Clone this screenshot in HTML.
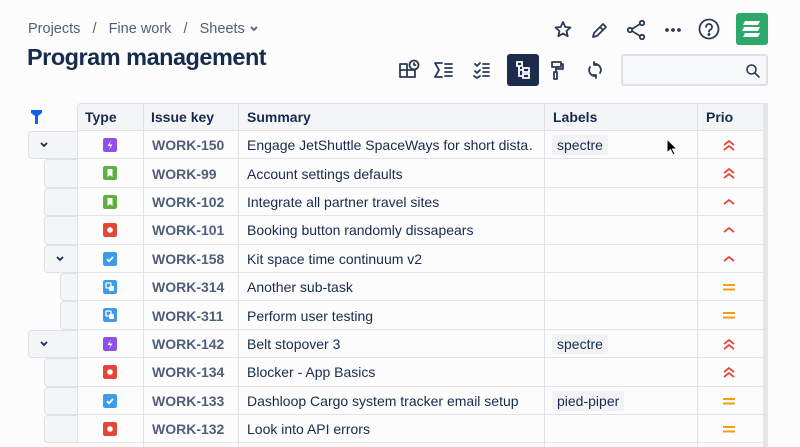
<!DOCTYPE html>
<html><head><meta charset="utf-8">
<style>
*{box-sizing:border-box;margin:0;padding:0}
html,body{width:800px;height:447px;overflow:hidden}
body{background:#fcfcfd;font-family:"Liberation Sans",sans-serif;position:relative;color:#172b4d}
.a{position:absolute}
.bc{left:28px;top:21px;font-size:14.5px;color:#505f79;white-space:nowrap}
.title{left:27px;top:44px;font-size:23.5px;font-weight:bold;color:#172b4d;letter-spacing:-0.5px}
.hdr{top:103px;height:28px;background:#f4f5f7;border-top:1px solid #dfe1e6;border-bottom:1px solid #dfe1e6;font-weight:bold;font-size:14px}
.row{left:28px;width:740px;height:28.4px}
.cell{position:absolute;top:0;height:100%;border-bottom:1px solid #e2e4e9;display:flex;align-items:center;font-size:14px;white-space:nowrap;overflow:hidden}
.g{background:#f4f5f7;border:1px solid #dfe1e6;border-right:none;border-radius:4px 0 0 4px}
.vl{position:absolute;top:103px;height:344px;width:1px;background:#dfe1e6}
.key{color:#505f79;font-weight:bold;padding-left:9px}
.sum{padding-left:9px;color:#172b4d}
.lab{background:#f1f2f4;border-radius:3px;padding:2px 5px;margin-left:8px;font-size:14px}
.ti{position:absolute;left:75px;width:14px;height:14px;border-radius:2px}
#clip{position:absolute;left:0;top:0;width:800px;height:447px;overflow:hidden}
</style></head><body>
<div id="clip">
<div class="a bc">Projects &nbsp;&nbsp;/&nbsp;&nbsp; Fine work &nbsp;&nbsp;/&nbsp;&nbsp; Sheets <svg width="10" height="8" viewBox="0 0 10 8"><path d="M2 2l3 3 3-3" stroke="#505f79" stroke-width="1.8" fill="none"/></svg></div>
<div class="a title">Program management</div>

<svg class="a" style="left:553px;top:19px" width="160" height="22" viewBox="0 0 160 22" fill="none" stroke="#2c3a55" stroke-width="1.8" stroke-linejoin="round" stroke-linecap="round">
<path d="M10 3l2.3 5 5.2.5-4 3.5 1.2 5.2L10 14.5 5.3 17.2 6.5 12 2.5 8.5 7.7 8z"/>
<path d="M40 18l1-4 9-9 3 3-9 9zM47 8l3 3"/>
<circle cx="77" cy="11" r="2.2"/><circle cx="89" cy="4" r="2.2"/><circle cx="89" cy="18" r="2.2"/><path d="M79 10l8-5M79 12l8 5"/>
<circle cx="114" cy="11" r="1" fill="#2c3a55"/><circle cx="120" cy="11" r="1" fill="#2c3a55"/><circle cx="126" cy="11" r="1" fill="#2c3a55"/>
</svg>
<svg class="a" style="left:698px;top:18px" width="24" height="24" viewBox="0 0 24 24" fill="none" stroke="#2c3a55" stroke-width="1.8" stroke-linecap="round"><circle cx="11" cy="11" r="9.5"/><path d="M8 9a3 3 0 1 1 4 2.8c-.8.4-1 1-1 2"/><circle cx="11" cy="16.5" r=".6" fill="#2c3a55"/></svg>
<div class="a" style="left:736px;top:13px;width:32px;height:32px;background:#2ea86a;border-radius:3px"></div>
<svg class="a" style="left:736px;top:13px" width="32" height="32" viewBox="0 0 32 32" fill="#fff"><path d="M9 8h15l-2 4H7zM8 14h16l-2 4H6zM9 20h15l-2 4H7z"/></svg>

<svg class="a" style="left:398px;top:58px" width="210" height="24" viewBox="0 0 210 24" fill="none" stroke="#2c3a55" stroke-width="1.8" stroke-linecap="round" stroke-linejoin="round">
<path d="M2 6h7v6H2zM2 12h7v7H2zM9 12h8v7H9z"/><circle cx="16" cy="7" r="4.5"/><path d="M16 5v2h1.5"/>
<path d="M44 5h-7l4 7-4 7h7M47 6h7M47 10h7M47 14h7M47 18h7"/>
<path d="M77 6l2 2 3-3M77 13l2 2 3-3M76 18l3 2 3-2M85 6h6M85 10h6M85 14h6M85 18h6"/>
<path d="M154 4h9v5h-9zM158 9v5M156 14h3v7h-3zM163 6h2v5h-7"/>
<path d="M196 6a6 6 0 0 1 6 9M196 4v3h3M198 18a6 6 0 0 1-6-9M198 20v-3h-3"/>
</svg>
<div class="a" style="left:507px;top:54px;width:32px;height:32px;background:#1d2b4c;border-radius:3px"></div>
<svg class="a" style="left:511px;top:58px" width="24" height="24" viewBox="0 0 24 24" fill="none" stroke="#fff" stroke-width="1.8" stroke-linecap="round"><path d="M6 4h5v4H6zM8 8v10h4M8 12h4M12 10h6v4h-6zM12 16h6v4h-6z"/></svg>
<div class="a" style="left:621px;top:54px;width:147px;height:32px;border:2px solid #dfe1e6;border-radius:3px;background:#f7f8f9"></div>
<svg class="a" style="left:745px;top:63px" width="16" height="16" viewBox="0 0 16 16" fill="none" stroke="#2c3a55" stroke-width="1.6" stroke-linecap="round"><circle cx="6.5" cy="6.5" r="4.5"/><path d="M10 10l4 4"/></svg>

<svg class="a" style="left:31px;top:110px" width="11" height="14" viewBox="0 0 11 14"><path d="M0 0h11v3L7 6v8H4V6L0 3z" fill="#0c66e4"/></svg>
<div class="a hdr" style="left:77px;width:691px;border-left:1px solid #dfe1e6;border-radius:4px 0 0 0"></div>
<div class="a" style="left:85px;top:109px;font-weight:bold;font-size:14px">Type</div>
<div class="a" style="left:151px;top:109px;font-weight:bold;font-size:14px">Issue key</div>
<div class="a" style="left:247px;top:109px;font-weight:bold;font-size:14px">Summary</div>
<div class="a" style="left:553px;top:109px;font-weight:bold;font-size:14px">Labels</div>
<div class="a" style="left:706px;top:109px;font-weight:bold;font-size:14px">Prio</div>
<div class="a" style="left:763px;top:103px;width:5px;height:344px;background:#e4e6ea"></div>

<div id="rows"></div>
<div class="vl" style="left:143px"></div>
<div class="vl" style="left:238px"></div>
<div class="vl" style="left:544px"></div>
<div class="vl" style="left:697px"></div>

<svg class="a" style="left:666px;top:138px" width="12" height="18" viewBox="0 0 12 18"><path d="M1 1v14l3.5-3.5 2.5 5.5 2-1-2.5-5H11z" fill="#000" stroke="#fff" stroke-width="1"/></svg>
</div>
<script>
var data=[
[0,1,'epic','WORK-150','Engage JetShuttle SpaceWays for short dista…','spectre','hh'],
[1,0,'story','WORK-99','Account settings defaults','','hh'],
[1,0,'story','WORK-102','Integrate all partner travel sites','','h'],
[1,0,'bug','WORK-101','Booking button randomly dissapears','','h'],
[1,1,'task','WORK-158','Kit space time continuum v2','','h'],
[2,0,'sub','WORK-314','Another sub-task','','m'],
[2,0,'sub','WORK-311','Perform user testing','','m'],
[0,1,'epic','WORK-142','Belt stopover 3','spectre','hh'],
[1,0,'bug','WORK-134','Blocker - App Basics','','hh'],
[1,0,'task','WORK-133','Dashloop Cargo system tracker email setup','pied-piper','m'],
[1,0,'bug','WORK-132','Look into API errors','','m']];
var icons={
epic:'<rect width="14" height="14" rx="2" fill="#8f4fe8"/><path d="M8 2.5L4.5 8h3l-1.5 4 3.5-5.5h-3z" fill="#fff"/>',
story:'<rect width="14" height="14" rx="2" fill="#5fb040"/><path d="M4.5 3h5v8L7 9l-2.5 2z" fill="#fff"/>',
bug:'<rect width="14" height="14" rx="2" fill="#e2483a"/><circle cx="7" cy="7" r="2.8" fill="#fff"/>',
task:'<rect width="14" height="14" rx="2" fill="#3d9be9"/><path d="M4 7.2l2 2 4-4.2" stroke="#fff" stroke-width="1.8" fill="none"/>',
sub:'<rect width="14" height="14" rx="2" fill="#3d9be9"/><rect x="3" y="3" width="5" height="5" rx="1" fill="none" stroke="#fff" stroke-width="1.3"/><rect x="6" y="6" width="5" height="5" rx="1" fill="#fff"/>'};
var pr={hh:'<path d="M1 7l5-4 5 4M1 12l5-4 5 4" stroke="#e5493a" stroke-width="1.8" fill="none"/>',
h:'<path d="M1 9l5-4 5 4" stroke="#e5493a" stroke-width="1.8" fill="none"/>',
m:'<path d="M0 5h12M0 9.5h12" stroke="#f5a00b" stroke-width="2"/>'};
var h='';
data.forEach(function(r,i){
 var t=131+i*28.4;
 var gl=28+r[0]*16;
 h+='<div class="a row" style="top:'+t+'px">';
 h+='<div class="cell g" style="left:'+(gl-28)+'px;width:'+(77-gl)+'px;">'+(r[1]?'<svg style="margin-left:10px" width="10" height="8" viewBox="0 0 10 8"><path d="M2 2l3 3 3-3" stroke="#172b4d" stroke-width="1.8" fill="none"/></svg>':'')+'</div>';
 h+='<div class="cell" style="left:49px;width:691px;border-left:1px solid #dfe1e6"></div>';
 if(r[2])h+='<svg class="ti" style="top:7px" width="14" height="14" viewBox="0 0 14 14">'+icons[r[2]]+'</svg>';
 h+='<div class="cell key" style="left:115px;width:95px;border:none">'+r[3]+'</div>';
 h+='<div class="cell sum" style="left:210px;width:296px;border:none">'+r[4]+'</div>';
 if(r[5])h+='<div class="cell" style="left:516px;width:150px;border:none"><span class="lab">'+r[5]+'</span></div>';
 if(r[6])h+='<svg class="a" style="left:695px;top:7px" width="12" height="14" viewBox="0 0 12 14">'+pr[r[6]]+'</svg>';
 h+='</div>';
});
document.getElementById('rows').innerHTML=h;
</script>
</body></html>
